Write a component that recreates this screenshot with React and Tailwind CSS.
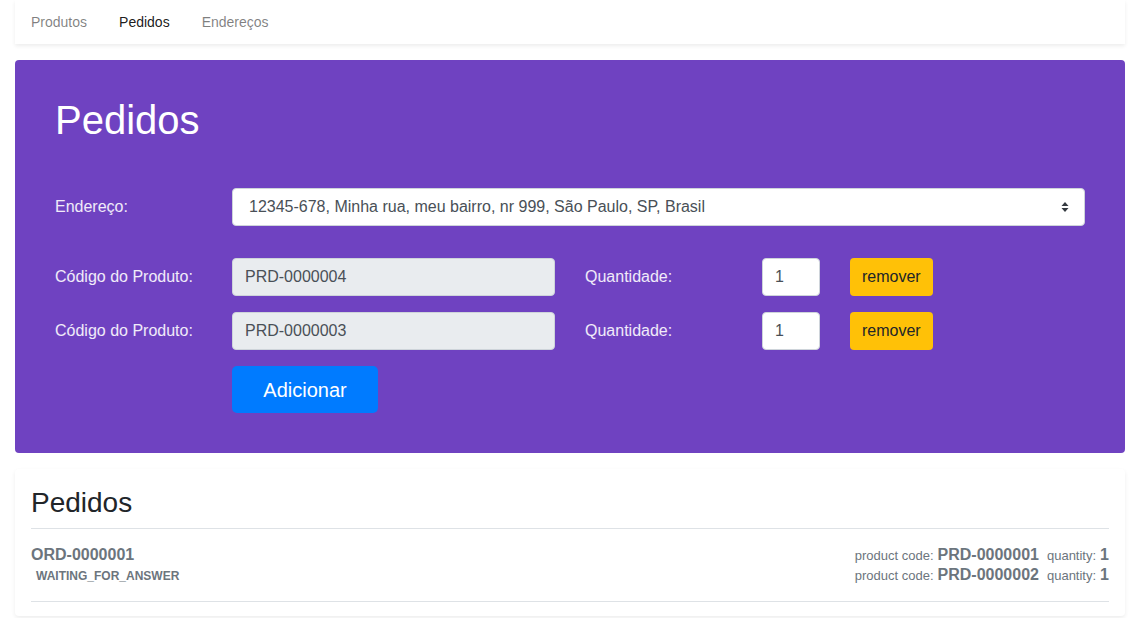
import React from "react";

function SelectArrow() {
  return (
    <svg width="8" height="12" viewBox="0 0 8 12" className="absolute right-[15px] top-1/2 -translate-y-1/2">
      <path d="M4 1 L7.5 5 H0.5 Z" fill="#343a40" />
      <path d="M4 11 L7.5 7 H0.5 Z" fill="#343a40" />
    </svg>
  );
}

function ProductRow({ code }) {
  return (
    <div className="flex items-center h-[38px]">
      <div className="w-[177px] text-[16px] text-white/90">Código do Produto:</div>
      <div className="w-[323px] h-[38px] flex items-center px-3 bg-[#e9ecef] border border-[#ced4da] rounded-[4px] text-[16px] text-[#495057]">
        {code}
      </div>
      <div className="w-[177px] ml-[30px] text-[16px] text-white/90">Quantidade:</div>
      <div className="w-[58px] h-[38px] flex items-center px-3 bg-white border border-[#ced4da] rounded-[4px] text-[16px] text-[#495057]">
        1
      </div>
      <button className="ml-[30px] h-[38px] px-3 bg-[#ffc107] rounded-[4px] text-[16px] text-[#212529]">
        remover
      </button>
    </div>
  );
}

export default function App() {
  return (
    <div className="min-h-[618px] bg-white px-[15px] font-['Liberation_Sans',Arial,sans-serif]">
      <nav className="h-[44px] flex items-center bg-white shadow-[0_2px_4px_rgba(0,0,0,0.075)]">
        <a className="px-4 text-[14px] text-black/50">Produtos</a>
        <a className="px-4 text-[14px] text-black/90">Pedidos</a>
        <a className="px-4 text-[14px] text-black/50">Endereços</a>
      </nav>

      <section className="mt-4 bg-[#6f42c1] rounded-[4px] px-10 pt-[36px] pb-10">
        <h1 className="text-[40px] leading-[1.2] text-white">Pedidos</h1>
        <div className="mt-[44px] flex items-center h-[38px]">
          <div className="w-[177px] text-[16px] text-white/90">Endereço:</div>
          <div className="relative flex-1 h-[38px] flex items-center pl-4 bg-white border border-[#ced4da] rounded-[4px] text-[16px] text-[#495057]">
            12345-678, Minha rua, meu bairro, nr 999, São Paulo, SP, Brasil
            <SelectArrow />
          </div>
        </div>
        <div className="mt-[32px] flex flex-col gap-4">
          <ProductRow code="PRD-0000004" />
          <ProductRow code="PRD-0000003" />
          <div className="pl-[177px]">
            <button className="w-[146px] h-[47px] bg-[#007bff] rounded-[5px] text-[20px] text-white">
              Adicionar
            </button>
          </div>
        </div>
      </section>

      <section className="mt-4 bg-white rounded-[4px] shadow-[0_2px_4px_rgba(0,0,0,0.075)] px-4 pt-[17px] pb-[14px]">
        <h3 className="text-[28px] leading-[1.2] text-[#212529] pb-[8px] border-b border-[#dee2e6]">Pedidos</h3>
        <div className="flex justify-between py-4 border-b border-[#dee2e6] text-[#6c757d]">
          <div className="flex flex-col">
            <div className="h-[20px] text-[16px] leading-[20px] font-bold">ORD-0000001</div>
            <div className="h-[20px] pt-[1px] ml-[5px] text-[12px] leading-[20px] font-bold">WAITING_FOR_ANSWER</div>
          </div>
          <div className="flex flex-col">
            {["PRD-0000001", "PRD-0000002"].map((c) => (
              <div key={c} className="h-[20px] leading-[20px] whitespace-nowrap overflow-visible">
                <span className="text-[13px] leading-[20px] align-baseline">product code:</span>
                <span className="ml-[4px] text-[16px] leading-[20px] font-bold">{c}</span>
                <span className="ml-[8px] text-[13px] leading-[20px]">quantity:</span>
                <span className="ml-[4px] text-[16px] leading-[20px] font-bold">1</span>
              </div>
            ))}
          </div>
        </div>
      </section>
    </div>
  );
}
